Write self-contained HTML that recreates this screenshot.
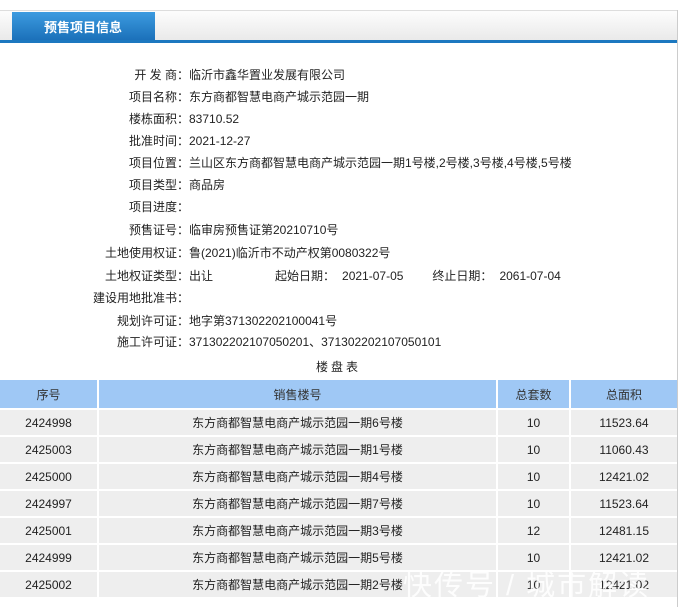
<!DOCTYPE html>
<html><head><meta charset="utf-8"><style>
body{margin:0;width:680px;height:607px;background:#fff;font-family:"Liberation Sans","Noto Sans CJK SC",sans-serif;font-size:12px;color:#222;position:relative;overflow:hidden}
.bar{position:absolute;left:0;top:10px;width:677px;height:30px;background:linear-gradient(#fdfdfd,#e9e9e9);border-top:1px solid #ddd}
.line{position:absolute;left:0;top:40px;width:677px;height:3px;background:#1c78c0}
.tab{position:absolute;left:12px;top:12px;width:143px;height:29px;background:linear-gradient(#3c9be0,#1a6fb8);color:#fff;font-weight:bold;font-size:13px;line-height:31px;text-indent:32px}
.rt{position:absolute;left:677px;top:10px;width:1px;height:597px;background:#ccc}
.row{position:absolute;left:0;width:680px;height:22px;line-height:22px}
.row .l{position:absolute;right:491px;text-align:right;white-space:nowrap}
.row .v{position:absolute;left:189px;white-space:nowrap}
.cap{position:absolute;top:358px;left:0;width:677px;text-align:center;letter-spacing:3px}
table{position:absolute;left:0;top:378px;width:681px;border-collapse:separate;border-spacing:2px;margin-left:-2px;}
td{background:#eee;height:25px;text-align:center;padding:0}
th{background:#9fc8f5;height:28px;font-weight:normal;padding:0;color:#333}
.wm{position:absolute;left:403px;top:562px;font-size:29px;color:rgba(255,255,255,.85);letter-spacing:2px;white-space:nowrap}
</style></head><body>
<div class="bar"></div><div class="tab">预售项目信息</div><div class="line"></div><div class="rt"></div>
<div class="row" style="top:64px"><span class="l">开 发 商：</span><span class="v">临沂市鑫华置业发展有限公司</span></div>
<div class="row" style="top:86px"><span class="l">项目名称：</span><span class="v">东方商都智慧电商产城示范园一期</span></div>
<div class="row" style="top:108px"><span class="l">楼栋面积：</span><span class="v">83710.52</span></div>
<div class="row" style="top:130px"><span class="l">批准时间：</span><span class="v">2021-12-27</span></div>
<div class="row" style="top:152px"><span class="l">项目位置：</span><span class="v">兰山区东方商都智慧电商产城示范园一期1号楼,2号楼,3号楼,4号楼,5号楼</span></div>
<div class="row" style="top:174px"><span class="l">项目类型：</span><span class="v">商品房</span></div>
<div class="row" style="top:196px"><span class="l">项目进度：</span><span class="v"></span></div>
<div class="row" style="top:219px"><span class="l">预售证号：</span><span class="v">临审房预售证第20210710号</span></div>
<div class="row" style="top:242px"><span class="l">土地使用权证：</span><span class="v">鲁(2021)临沂市不动产权第0080322号</span></div>
<div class="row" style="top:265px"><span class="l">土地权证类型：</span><span class="v">出让<span style="margin-left:62px">起始日期：</span><span style="margin-left:7px">2021-07-05</span><span style="margin-left:29px">终止日期：</span><span style="margin-left:7px">2061-07-04</span></span></div>
<div class="row" style="top:287px"><span class="l">建设用地批准书：</span><span class="v"></span></div>
<div class="row" style="top:310px"><span class="l">规划许可证：</span><span class="v">地字第371302202100041号</span></div>
<div class="row" style="top:331px"><span class="l">施工许可证：</span><span class="v">371302202107050201、371302202107050101</span></div>
<div class="cap">楼盘表</div>
<table>
<tr><th style="width:97px">序号</th><th style="width:397px">销售楼号</th><th style="width:71px">总套数</th><th>总面积</th></tr>
<tr><td>2424998</td><td>东方商都智慧电商产城示范园一期6号楼</td><td>10</td><td>11523.64</td></tr>
<tr><td>2425003</td><td>东方商都智慧电商产城示范园一期1号楼</td><td>10</td><td>11060.43</td></tr>
<tr><td>2425000</td><td>东方商都智慧电商产城示范园一期4号楼</td><td>10</td><td>12421.02</td></tr>
<tr><td>2424997</td><td>东方商都智慧电商产城示范园一期7号楼</td><td>10</td><td>11523.64</td></tr>
<tr><td>2425001</td><td>东方商都智慧电商产城示范园一期3号楼</td><td>12</td><td>12481.15</td></tr>
<tr><td>2424999</td><td>东方商都智慧电商产城示范园一期5号楼</td><td>10</td><td>12421.02</td></tr>
<tr><td>2425002</td><td>东方商都智慧电商产城示范园一期2号楼</td><td>10</td><td>12421.02</td></tr>
</table>
<div class="wm">快传号 / 城市解读</div>
</body></html>
